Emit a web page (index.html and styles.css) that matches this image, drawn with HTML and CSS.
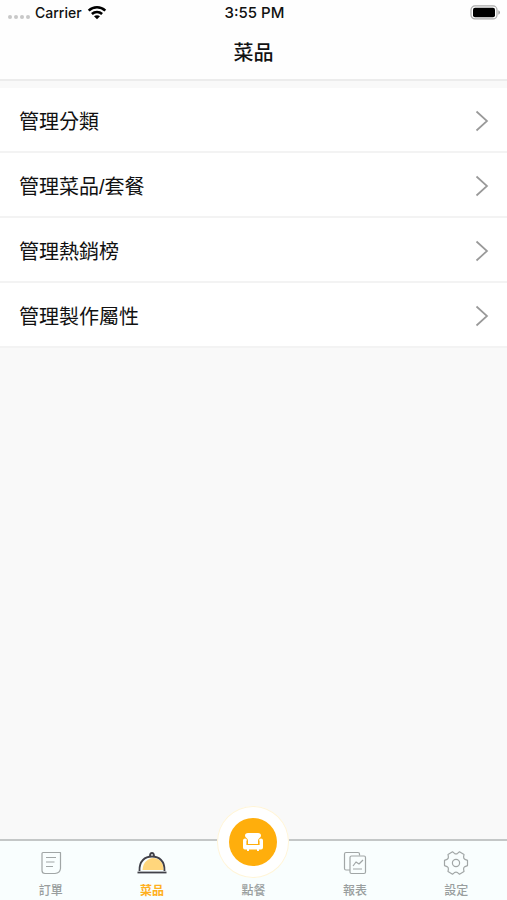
FILE: index.html
```html
<!DOCTYPE html>
<html lang="zh-Hant">
<head>
<meta charset="utf-8">
<meta name="viewport" content="width=device-width, initial-scale=1">
<title>菜品</title>
<link rel="stylesheet" href="styles.css">
</head>
<body>
<header class="header">
  <div class="status">
    <div class="carrier">
      <span class="dots"><i></i><i></i><i></i><i></i></span>
      <span>Carrier</span>
      <svg class="wifi" width="20" height="15" viewBox="0 0 20 15" fill="none" stroke="#000" stroke-width="2.6">
        <path d="M1.7 5.6C6.4 1.2 13.6 1.2 18.3 5.6"/>
        <path d="M4.9 9C7.8 6.3 12.2 6.3 15.1 9"/>
        <path d="M10 14.2L7 11.3C8.7 9.9 11.3 9.9 13 11.3Z" fill="#000" stroke="none"/>
      </svg>
    </div>
    <time class="clock">3:55 PM</time>
    <svg class="battery" width="31" height="15" viewBox="0 0 31 15">
      <rect x="1" y=".9" width="26" height="13" rx="4" fill="#fff" stroke="#aaa" stroke-width="1.2"/>
      <rect x="3" y="2.8" width="22" height="9.4" rx="2" fill="#000"/>
      <path d="M28.4 5.2Q30 6 30 7.5T28.4 9.8Z" fill="#999"/>
    </svg>
  </div>
  <h1 class="title">菜品</h1>
</header>
<main class="content">
  <nav class="menu" aria-label="菜品">
    <a class="row" href="#categories">管理分類<svg class="chevron" viewBox="0 0 14 22"><path d="M1.5 1.5L12 11L1.5 20.5"/></svg></a>
    <a class="row" href="#dishes">管理菜品/套餐<svg class="chevron" viewBox="0 0 14 22"><path d="M1.5 1.5L12 11L1.5 20.5"/></svg></a>
    <a class="row" href="#popular">管理熱銷榜<svg class="chevron" viewBox="0 0 14 22"><path d="M1.5 1.5L12 11L1.5 20.5"/></svg></a>
    <a class="row" href="#attributes">管理製作屬性<svg class="chevron" viewBox="0 0 14 22"><path d="M1.5 1.5L12 11L1.5 20.5"/></svg></a>
  </nav>
</main>
<nav class="tabs" aria-label="主選單">
  <a class="tab" href="#orders">
    <svg class="icon" viewBox="-15 -12 30 24">
      <path d="M-8-10.500H9.500V5.500Q9 10 4 10.500H-6Q-9 10.500-9 7.500V-9.500Q-9-10.500-8-10.500ZM-5-5.500H5M-5-1H3.500M-5 3.500H2"/>
    </svg>
    <span>訂單</span>
  </a>
  <a class="tab active" href="#menu" aria-current="page">
    <svg class="icon dish" viewBox="-15 -12 30 24">
      <path d="M-9.500 7C-9-1-4-4.500 1-5C8-5 11.500 0 11.500 7Z" fill="#ffd67c" stroke="none"/>
      <path d="M-12.500 8C-13-2-7-6.500 0-6.500S13-2 12.500 8"/>
      <path d="M-14.500 9.500H14.500"/>
      <path d="M-2-7Q-2-10 0-10T2-7"/>
    </svg>
    <span>菜品</span>
  </a>
  <a class="tab" href="#serve">
    <span class="bubble">
      <svg width="72" height="72" viewBox="-36 -36 72 72">
        <circle r="24" fill="#ffae0c"/>
        <path d="M-5-9H5Q8-9 8-6.500Q8-5 6.500-4Q5-3 5-1V2H-5V-1Q-5-3-6.500-4Q-8-5-8-6.500Q-8-9-5-9Z" fill="#fff"/>
        <path d="M-8-3.500Q-6-3.500-6-1.500V3H6V-1.500Q6-3.500 8-3.500Q10-3.500 10-1.500V5.500Q10 7.500 8 7.500H-8Q-10 7.500-10 5.500V-1.500Q-10-3.500-8-3.500Z" fill="#fff"/>
        <path d="M-6-1.500V2.500H6V-1.500" fill="none" stroke="#ffae0c" stroke-width="1.200"/>
        <path d="M-6 7H-4V9H-6ZM4 7H6V9H4Z" fill="#fff"/>
      </svg>
    </span>
    <span>點餐</span>
  </a>
  <a class="tab" href="#reports">
    <svg class="icon" viewBox="-15 -12 30 24">
      <path d="M-5 7H-9Q-10.500 7-10.500 5.500V-9Q-10.500-10.500-9-10.500H3Q4.500-10.500 4.500-9V-7.500"/>
      <rect x="-5" y="-7" width="15.500" height="17.500" rx="1.500"/>
      <path d="M-2 3L1-1L4 1L8-3M-2 6H7"/>
    </svg>
    <span>報表</span>
  </a>
  <a class="tab" href="#settings">
    <svg class="icon" viewBox="-15 -12 30 24">
      <path d="M11.500-2.600V2.600L9 3.600Q7.500 4.500 7.600 6L8 8.600L3.500 11.200L1.500 9.600Q0 8.700-1.500 9.600L-3.500 11.200L-8 8.600L-7.600 6Q-7.500 4.500-9 3.600L-11.500 2.600V-2.600L-9-3.600Q-7.500-4.500-7.600-6L-8-8.600L-3.500-11.200L-1.500-9.600Q0-8.700 1.500-9.600L3.500-11.200L8-8.600L7.600-6Q7.500-4.500 9-3.600Z"/>
      <circle r="3.600"/>
    </svg>
    <span>設定</span>
  </a>
</nav>
</body>
</html>
```
FILE: styles.css
```css
* {
  box-sizing: border-box;
}

body {
  margin: 0;
  min-height: 100vh;
  display: flex;
  flex-direction: column;
  background: #f9f9f9;
  color: #111;
  font-family: Inter, "Noto Sans CJK TC", sans-serif;
}

a {
  color: inherit;
  text-decoration: none;
}

.header {
  background: #fefefe;
  border-bottom: 2px solid #ececec;
}

.status {
  display: grid;
  grid-template-columns: 1fr auto 1fr;
  align-items: center;
  height: 25px;
  padding: 0 6px 0 8px;
  font-size: 14px;
  font-weight: 500;
}

.clock {
  font-size: 15px;
}

.carrier {
  display: flex;
  align-items: center;
  gap: 5px;
}

.dots {
  display: flex;
  gap: 2px;
  padding-top: 8px;
}

.dots i {
  width: 4px;
  height: 4px;
  border-radius: 50%;
  background: #c8c8c8;
}

.battery {
  justify-self: end;
}

.title {
  margin: 0;
  height: 54px;
  line-height: 56px;
  text-align: center;
  font-size: 20px;
  font-weight: 500;
}

.content {
  flex: 1;
  padding-top: 7px;
}

.row {
  display: flex;
  align-items: center;
  justify-content: space-between;
  height: 65px;
  padding: 2px 18px 0 19px;
  background: #fff;
  border-bottom: 2px solid #f3f3f3;
  font-family: "Liberation Sans", "Noto Sans CJK TC", sans-serif;
  font-size: 20px;
}

.chevron {
  width: 14px;
  height: 22px;
  fill: none;
  stroke: #999;
  stroke-width: 1.7;
}

.tabs {
  display: grid;
  grid-template-columns: repeat(5, 1fr);
  height: 61px;
  background: #f9fefe;
  border-top: 2px solid #c4c7c7;
}

.tab {
  position: relative;
  display: flex;
  flex-direction: column;
  align-items: center;
  justify-content: flex-end;
  color: #999e9e;
  font-size: 12px;
  font-weight: 500;
  line-height: 18px;
}

.icon {
  width: 30px;
  height: 24px;
  margin-bottom: 7px;
  overflow: visible;
  fill: none;
  stroke: #a1a6a6;
  stroke-width: 1.2;
  stroke-linejoin: round;
}

.active {
  color: #ffb020;
  font-weight: 700;
}

.dish {
  stroke: #414149;
  stroke-width: 1.8;
}

.bubble {
  position: absolute;
  top: -35px;
  left: 50%;
  width: 72px;
  height: 72px;
  margin-left: -36px;
  border-radius: 50%;
  background: #fff;
  box-shadow: inset 0 0 0 1px #fff5d8;
}
```
